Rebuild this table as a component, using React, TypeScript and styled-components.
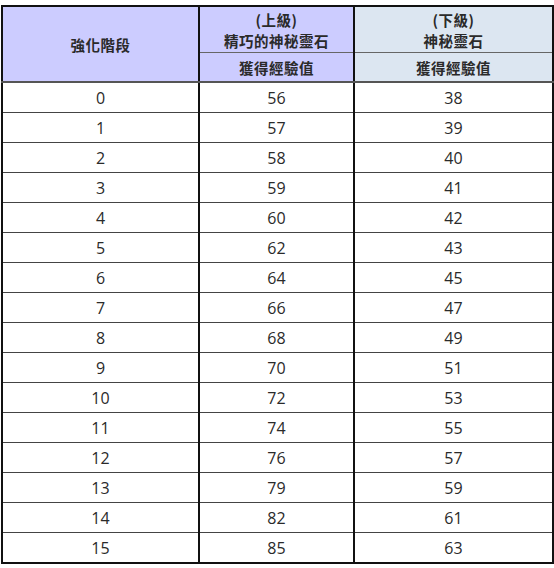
import React from "react";
import styled, { createGlobalStyle } from "styled-components";

const GlobalStyle = createGlobalStyle`
  html, body {
    margin: 0;
    padding: 0;
    background: #ffffff;
  }
`;

const Page = styled.div`
  padding: 5px 0 0 1px;
  width: 554px;
  height: 568px;
  box-sizing: border-box;
`;

const Table = styled.table`
  border-collapse: collapse;
  table-layout: fixed;
  width: 551px;
  border: 2px solid #111;
  font-family: "Noto Sans CJK TC", "Noto Sans", sans-serif;
  color: #222;
`;

const HeadCell = styled.th<{ $tone: "purple" | "blue"; $sub?: boolean }>`
  background: ${(p) => (p.$tone === "purple" ? "#ccccff" : "#dce6f1")};
  font-size: 14.5px;
  font-weight: 600;
  letter-spacing: 0.5px;
  line-height: 21px;
  text-align: center;
  padding: 0;
  height: ${(p) => (p.$sub ? "28px" : "45px")};
  border-left: 2px solid #111;
  border-right: 2px solid #111;
  border-bottom: ${(p) => (p.$sub ? "2px solid #555" : "1px solid #666")};
  color: #2a2a2a;
`;

const Cell = styled.td`
  font-family: "Open Sans", "Noto Sans", sans-serif;
  font-size: 16px;
  text-align: center;
  height: 29px;
  padding: 0;
  border-left: 2px solid #111;
  border-right: 2px solid #111;
  border-bottom: 1.5px solid #444;
  color: #2a2a2a;
`;

const rows: [number, number, number][] = [
  [0, 56, 38],
  [1, 57, 39],
  [2, 58, 40],
  [3, 59, 41],
  [4, 60, 42],
  [5, 62, 43],
  [6, 64, 45],
  [7, 66, 47],
  [8, 68, 49],
  [9, 70, 51],
  [10, 72, 53],
  [11, 74, 55],
  [12, 76, 57],
  [13, 79, 59],
  [14, 82, 61],
  [15, 85, 63],
];

export default function App() {
  return (
    <Page>
      <GlobalStyle />
      <Table>
        <colgroup>
          <col style={{ width: 197 }} />
          <col style={{ width: 155 }} />
          <col style={{ width: 199 }} />
        </colgroup>
        <thead>
          <tr>
            <HeadCell $tone="purple" rowSpan={2} $sub>
              強化階段
            </HeadCell>
            <HeadCell $tone="purple">
              (上級)
              <br />
              精巧的神秘靈石
            </HeadCell>
            <HeadCell $tone="blue">
              (下級)
              <br />
              神秘靈石
            </HeadCell>
          </tr>
          <tr>
            <HeadCell $tone="purple" $sub>
              獲得經驗值
            </HeadCell>
            <HeadCell $tone="blue" $sub>
              獲得經驗值
            </HeadCell>
          </tr>
        </thead>
        <tbody>
          {rows.map(([stage, upper, lower]) => (
            <tr key={stage}>
              <Cell>{stage}</Cell>
              <Cell>{upper}</Cell>
              <Cell>{lower}</Cell>
            </tr>
          ))}
        </tbody>
      </Table>
    </Page>
  );
}
